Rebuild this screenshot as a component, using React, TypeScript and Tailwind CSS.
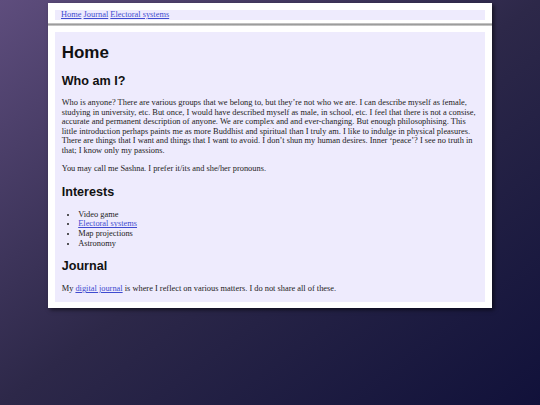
// Personal homepage — white sheet on a dusky gradient, lavender nav + content panels.

const serif = { fontFamily: '"Liberation Serif", "Times New Roman", serif' };
const sans = { fontFamily: '"Liberation Sans", Arial, sans-serif' };

const NAV_LINKS = ['Home', 'Journal', 'Electoral systems'];

const INTERESTS: { label: string; link?: boolean }[] = [
  { label: 'Video game' },
  { label: 'Electoral systems', link: true },
  { label: 'Map projections' },
  { label: 'Astronomy' },
];

function Link({ children }: { children: React.ReactNode }) {
  return (
    <a href="#" className="text-[#3f4bd0] underline decoration-[0.8px] underline-offset-[1px]">
      {children}
    </a>
  );
}

function H2({ children, className = '' }: { children: React.ReactNode; className?: string }) {
  return (
    <h2
      className={`text-[12.6px] leading-[14.5px] font-bold text-[#111] ${className}`}
      style={sans}
    >
      {children}
    </h2>
  );
}

export default function App() {
  return (
    <div className="min-h-screen bg-linear-to-br from-[#5e4d7d] via-[#2d2849] to-[#11113a] pt-[3px]">
      <div
        className="mx-auto w-[444px] bg-white pb-[6.5px] shadow-[2px_2px_4px_rgba(0,0,0,0.55)]"
        style={serif}
      >
        <header className="pt-[7px]">
          <nav className="mx-[7px] h-[9.5px] bg-[#eeebfd] px-[6px] text-[8.4px] leading-[9.5px]">
            {NAV_LINKS.map((l, i) => (
              <span key={l}>
                {i > 0 && ' '}
                <Link>{l}</Link>
              </span>
            ))}
          </nav>
          <div className="mt-[3px] h-[3.5px] bg-linear-to-b from-[#d4d4d4] via-[#9c9c9c] to-[#d8d8d8]" />
        </header>

        <main className="mx-[7px] mt-[6px] bg-[#eeebfd] px-[6.7px] pt-[11px] pb-[8px] text-[8.4px] leading-[9.5px] text-[#222]">
          <h1 className="text-[17px] leading-[20px] font-bold text-[#111]" style={sans}>
            Home
          </h1>

          <H2 className="mt-[10.7px]">Who am I?</H2>
          <p className="mt-[10px]">
            Who is anyone? There are various groups that we belong to, but they’re not who we
            are. I can describe myself as female, studying in university, etc. But once, I would
            have described myself as male, in school, etc. I feel that there is not a consise,
            accurate and permanent description of anyone. We are complex and and ever-changing.
            But enough philosophising. This little introduction perhaps paints me as more
            Buddhist and spiritual than I truly am. I like to indulge in physical pleasures. There
            are things that I want and things that I want to avoid. I don’t shun my human desires.
            Inner ‘peace’? I see no truth in that; I know only my passions.
          </p>
          <p className="mt-[9px]">You may call me Sashna. I prefer it/its and she/her pronouns.</p>

          <H2 className="mt-[11.4px]">Interests</H2>
          <ul className="mt-[10.2px] list-disc pl-[16.5px] leading-[9.67px]">
            {INTERESTS.map((it) => (
              <li key={it.label}>{it.link ? <Link>{it.label}</Link> : it.label}</li>
            ))}
          </ul>

          <H2 className="mt-[10.5px]">Journal</H2>
          <p className="mt-[10.6px]">
            My <Link>digital journal</Link> is where I reflect on various matters. I do not share
            all of these.
          </p>
        </main>
      </div>
    </div>
  );
}
